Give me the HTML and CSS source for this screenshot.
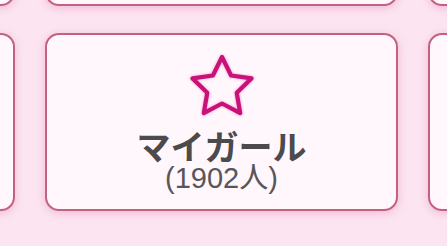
FILE: index.html
```html
<!DOCTYPE html>
<html lang="ja">
<head>
<meta charset="utf-8">
<link rel="stylesheet" href="styles.css">
</head>
<body>
<div class="grid">
  <div class="card"></div>
  <div class="card"></div>
  <div class="card"></div>
  <div class="card"></div>
  <div class="card main">
    <svg class="star" width="64" height="62" viewBox="0 0 64 62" aria-hidden="true">
      <path d="M32 2 L41.11 20.46 L61.48 23.42 L46.74 37.79 L50.22 58.08 L32 48.5 L13.78 58.08 L17.26 37.79 L2.52 23.42 L22.89 20.46 Z" fill="none" stroke="#c8127a" stroke-width="4.2" stroke-linejoin="round"/>
    </svg>
    <div class="title">マイガール</div>
    <div class="count">(1902人)</div>
  </div>
  <div class="card"></div>
</div>
</body>
</html>
```

FILE: styles.css
```css
html, body {
  margin: 0;
  padding: 0;
}
body {
  width: 447px;
  height: 246px;
  overflow: hidden;
  background: #fce5f1;
  font-family: "Noto Sans CJK JP", "Noto Sans", sans-serif;
}
.grid {
  display: grid;
  grid-template-columns: 353px 353px 353px;
  grid-auto-rows: 178px;
  column-gap: 30px;
  row-gap: 27px;
  margin-left: -338px;
  margin-top: -172px;
}
.card {
  box-sizing: border-box;
  border: 2px solid #c2627f;
  border-radius: 14px;
  background: #fff7fc;
  box-shadow: 0 2px 10px rgba(222, 100, 165, 0.35);
}
.main {
  display: flex;
  flex-direction: column;
  align-items: center;
  padding-top: 20px;
}
.star {
  display: block;
  margin-left: 1px;
  filter: drop-shadow(0 0 1.5px rgba(235, 70, 160, 0.55));
}
.title {
  margin-top: 12px;
  font-size: 34px;
  line-height: 34px;
  font-weight: 700;
  color: #4b4a4c;
}
.count {
  font-family: "Liberation Sans", "Noto Sans CJK JP", sans-serif;
  font-size: 29px;
  line-height: 30px;
  font-weight: 400;
  color: #58565a;
}
```
